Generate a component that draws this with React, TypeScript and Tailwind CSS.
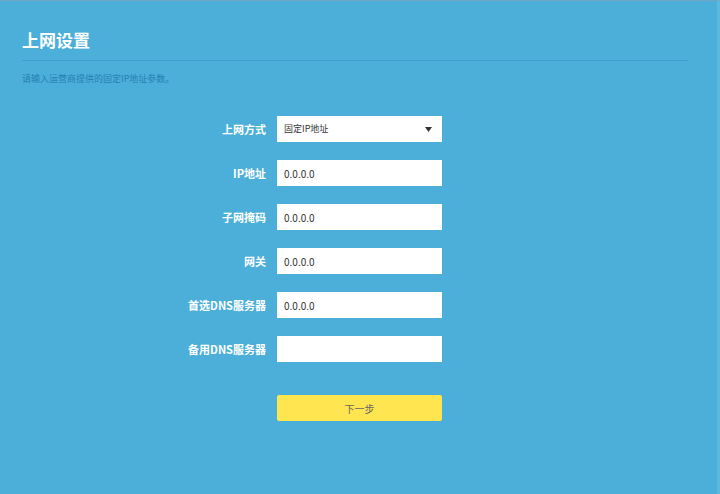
import React from "react";

const font = { fontFamily: '"Noto Sans CJK SC", "Noto Sans", sans-serif' };

const fields = [
  { label: "IP地址", value: "0.0.0.0" },
  { label: "子网掩码", value: "0.0.0.0" },
  { label: "网关", value: "0.0.0.0" },
  { label: "首选DNS服务器", value: "0.0.0.0" },
  { label: "备用DNS服务器", value: "" },
];

function Row({ label, children }: { label: string; children: React.ReactNode }) {
  return (
    <div className="flex items-center h-[26px]">
      <div className="w-[255px] pr-[11px] text-right text-[11px] font-bold text-white leading-none">
        {label}
      </div>
      {children}
    </div>
  );
}

export default function App() {
  return (
    <div
      className="w-[720px] h-[494px] bg-[#4cafd9] border-t border-[#6ea6c4] border-r-[3px] border-r-[#5cb8df] overflow-hidden"
      style={font}
    >
      <div className="pl-[22px] pr-[29px]">
        <h1 className="mt-[28px] text-[17px] font-bold text-white leading-[22px]">上网设置</h1>
        <div className="mt-[9px] h-px bg-[#3f9ecb]" />
        <p className="mt-[12px] text-[9px] text-[#2680b2] leading-[12px]">请输入运营商提供的固定IP地址参数。</p>
      </div>

      <div className="mt-[31px] pl-[22px] flex flex-col gap-[18px]">
        <Row label="上网方式">
          <div className="w-[165px] h-[26px] bg-white flex items-center justify-between pl-[7px] pr-[10px]">
            <span className="text-[9px] text-[#333]">固定IP地址</span>
            <svg width="7" height="5" viewBox="0 0 7 5">
              <path d="M0 0 L7 0 L3.5 5 Z" fill="#333" />
            </svg>
          </div>
        </Row>
        {fields.map((f) => (
          <Row key={f.label} label={f.label}>
            <div className="w-[165px] h-[26px] bg-white flex items-center pl-[7px]">
              <span className="text-[10px] text-[#333]">{f.value}</span>
            </div>
          </Row>
        ))}
      </div>

      <div className="mt-[33px] pl-[277px]">
        <button className="w-[165px] h-[26px] bg-[#ffe54f] rounded-[2px] text-[10px] text-[#666] flex items-center justify-center">
          下一步
        </button>
      </div>
    </div>
  );
}
